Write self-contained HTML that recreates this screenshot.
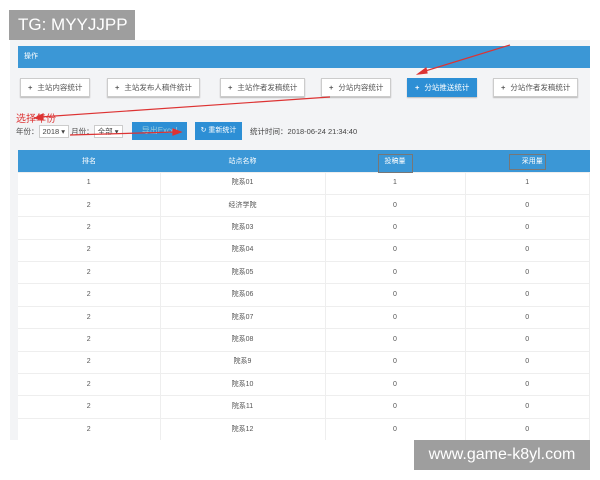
<!DOCTYPE html>
<html><head><meta charset="utf-8"><style>
*{margin:0;padding:0;box-sizing:border-box}
body{width:600px;height:480px;background:#fff;position:relative;overflow:hidden;font-family:"Liberation Sans","Noto Sans CJK SC",sans-serif;font-size:8px;color:#444}
.shot{position:absolute;left:10px;top:40px;width:580px;height:400px;background:#f3f4f6;overflow:hidden}
.tg{position:absolute;left:9px;top:10px;width:126px;height:30px;background:#9e9e9e;color:#fff;font-size:17px;line-height:30px;padding-left:9px}
.wm{position:absolute;left:414px;top:440px;width:176px;height:30px;background:#9e9e9e;color:#fff;font-size:16px;line-height:30px;text-align:center}
.bar{position:absolute;left:8px;top:6px;width:572px;height:22px;background:#3b97d6;color:#fff;font-size:7px;line-height:22px;padding-left:6px}
.btn{position:absolute;top:38px;height:19px;background:#fff;border:1px solid #ccc;box-shadow:0 1px 1px #bbb;font-size:7.5px;line-height:17px;padding:0 7px;color:#555;white-space:nowrap}
.btn b{font-weight:bold;margin-right:5px}
.btn.on{background:#2d8fd5;color:#fff;border-color:#2d8fd5}
.red{position:absolute;color:#d33;font-size:10px}
table{position:absolute;left:8px;top:110px;width:572px;border-collapse:collapse;background:#fff}
th{background:#3b97d6;color:#fff;font-weight:normal;height:22px;font-size:7px}
td{height:22.4px;text-align:center;vertical-align:middle;border-top:1px solid #eee;border-right:1px solid #eee;font-size:7px;color:#555;line-height:10px}
</style></head><body>
<div class="shot">
<div class="bar">操作</div>
<div class="btn" style="left:10px"><b>+</b>主站内容统计</div>
<div class="btn" style="left:97px"><b>+</b>主站发布人稿件统计</div>
<div class="btn" style="left:210px"><b>+</b>主站作者发稿统计</div>
<div class="btn" style="left:311px"><b>+</b>分站内容统计</div>
<div class="btn on" style="left:397px"><b>+</b>分站推送统计</div>
<div class="btn" style="left:483px"><b>+</b>分站作者发稿统计</div>
<div class="red" style="left:6px;top:70px">选择年份</div>
<div style="position:absolute;left:6px;top:85px;font-size:7.5px;line-height:14px;white-space:nowrap">年份：<span style="background:#fff;border:1px solid #ccc;padding:1px 3px">2018 ▾</span> 月份：<span style="background:#fff;border:1px solid #ccc;padding:1px 3px">全部 ▾</span></div>
<div style="position:absolute;left:122px;top:82px;width:55px;height:18px;background:#2d8fd5;color:#9cd;font-size:8px;line-height:18px;text-align:center">导出Excel</div>
<div style="position:absolute;left:185px;top:82px;width:47px;height:18px;background:#2d8fd5;color:#fff;font-size:7px;line-height:18px;text-align:center">↻ 重新统计</div>
<div style="position:absolute;left:240px;top:86px;font-size:7.5px">统计时间：2018-06-24 21:34:40</div>
<svg style="position:absolute;left:0;top:0" width="580" height="120"><g stroke="#d33" stroke-width="1.2" fill="#d33"><line x1="500" y1="5" x2="412" y2="32"/><polygon points="408,34 416,28 417,33"/><line x1="320" y1="57" x2="30" y2="77"/><polygon points="25,78 33,74 33,80"/><line x1="60" y1="95" x2="165" y2="92"/><polygon points="171,92 163,89 163,95"/></g></svg>
<table>
<tr><th style="width:142px">排名</th><th style="width:165px">站点名称</th><th style="width:140px"><span style="border:1px solid #777;padding:3px 6px 7px">投稿量</span></th><th><span style="border:1px solid #777;padding:3px 2px 4px 12px">采用量</span></th></tr>
<tr><td>1</td><td>院系01</td><td>1</td><td>1</td></tr>
<tr><td>2</td><td>经济学院</td><td>0</td><td>0</td></tr>
<tr><td>2</td><td>院系03</td><td>0</td><td>0</td></tr>
<tr><td>2</td><td>院系04</td><td>0</td><td>0</td></tr>
<tr><td>2</td><td>院系05</td><td>0</td><td>0</td></tr>
<tr><td>2</td><td>院系06</td><td>0</td><td>0</td></tr>
<tr><td>2</td><td>院系07</td><td>0</td><td>0</td></tr>
<tr><td>2</td><td>院系08</td><td>0</td><td>0</td></tr>
<tr><td>2</td><td>院系9</td><td>0</td><td>0</td></tr>
<tr><td>2</td><td>院系10</td><td>0</td><td>0</td></tr>
<tr><td>2</td><td>院系11</td><td>0</td><td>0</td></tr>
<tr><td>2</td><td>院系12</td><td>0</td><td>0</td></tr>
</table>
</div>
<div class="tg">TG: MYYJJPP</div>
<div class="wm">www.game-k8yl.com</div>
</body></html>
